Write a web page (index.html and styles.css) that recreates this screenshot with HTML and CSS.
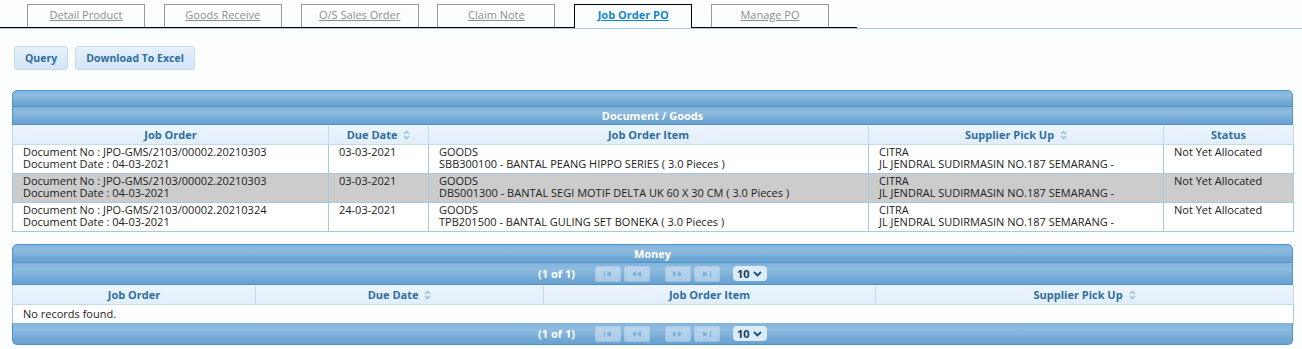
FILE: index.html
```html
<!DOCTYPE html>
<html>
<head>
<meta charset="utf-8">
<link rel="stylesheet" href="styles.css">
</head>
<body>
<div class="tabbar">
  <ul class="tabs">
    <li class="tab"><a href="#">Detail Product</a></li>
    <li class="tab"><a href="#">Goods Receive</a></li>
    <li class="tab"><a href="#">O/S Sales Order</a></li>
    <li class="tab"><a href="#">Claim Note</a></li>
    <li class="tab active"><a href="#">Job Order PO</a></li>
    <li class="tab"><a href="#">Manage PO</a></li>
  </ul>
</div>

<div class="toolbar">
  <button class="btn">Query</button>
  <button class="btn">Download To Excel</button>
</div>

<div class="datatable dt1">
  <div class="hbar top"></div>
  <div class="hbar title">Document / Goods</div>
  <table>
    <colgroup>
      <col style="width:316px"><col style="width:100px"><col style="width:440px"><col style="width:295px"><col style="width:130px">
    </colgroup>
    <thead>
      <tr>
        <th>Job Order</th>
        <th>Due Date <span class="sort"></span></th>
        <th>Job Order Item</th>
        <th>Supplier Pick Up <span class="sort"></span></th>
        <th>Status</th>
      </tr>
    </thead>
    <tbody>
      <tr>
        <td>Document No : JPO-GMS/2103/00002.20210303<br>Document Date : 04-03-2021</td>
        <td>03-03-2021</td>
        <td>GOODS<br>SBB300100 - BANTAL PEANG HIPPO SERIES ( 3.0 Pieces )</td>
        <td>CITRA<br>JL JENDRAL SUDIRMASIN NO.187 SEMARANG -</td>
        <td>Not Yet Allocated</td>
      </tr>
      <tr class="selected">
        <td>Document No : JPO-GMS/2103/00002.20210303<br>Document Date : 04-03-2021</td>
        <td>03-03-2021</td>
        <td>GOODS<br>DBS001300 - BANTAL SEGI MOTIF DELTA UK 60 X 30 CM ( 3.0 Pieces )</td>
        <td>CITRA<br>JL JENDRAL SUDIRMASIN NO.187 SEMARANG -</td>
        <td>Not Yet Allocated</td>
      </tr>
      <tr>
        <td>Document No : JPO-GMS/2103/00002.20210324<br>Document Date : 04-03-2021</td>
        <td>24-03-2021</td>
        <td>GOODS<br>TPB201500 - BANTAL GULING SET BONEKA ( 3.0 Pieces )</td>
        <td>CITRA<br>JL JENDRAL SUDIRMASIN NO.187 SEMARANG -</td>
        <td>Not Yet Allocated</td>
      </tr>
    </tbody>
  </table>
</div>

<div class="datatable dt2">
  <div class="hbar title top">Money</div>
  <div class="hbar pager">
    <span class="pcount">(1 of 1)</span>
    <span class="pbtn first"><svg width="8" height="6" viewBox="0 0 8 6"><rect x="0" y="0" width="1" height="6" fill="#3d7fbf"/><path d="M7 0 L2 3 L7 6Z" fill="#3d7fbf"/></svg></span>
    <span class="pbtn prev"><svg width="9" height="6" viewBox="0 0 9 6"><path d="M4 0 L0 3 L4 6Z M9 0 L5 3 L9 6Z" fill="#3d7fbf"/></svg></span>
    <span class="pbtn next gapl"><svg width="9" height="6" viewBox="0 0 9 6"><path d="M0 0 L4 3 L0 6Z M5 0 L9 3 L5 6Z" fill="#3d7fbf"/></svg></span>
    <span class="pbtn last"><svg width="8" height="6" viewBox="0 0 8 6"><path d="M0 0 L5 3 L0 6Z" fill="#3d7fbf"/><rect x="7" y="0" width="1" height="6" fill="#3d7fbf"/></svg></span>
    <span class="rpp">10 <svg width="9" height="6" viewBox="0 0 9 6"><path d="M1 1 L4.5 4.5 L8 1" fill="none" stroke="#1d4f7c" stroke-width="1.8"/></svg></span>
  </div>
  <table>
    <colgroup>
      <col style="width:243px"><col style="width:288px"><col style="width:332px"><col style="width:418px">
    </colgroup>
    <thead>
      <tr>
        <th>Job Order</th>
        <th>Due Date <span class="sort"></span></th>
        <th>Job Order Item</th>
        <th>Supplier Pick Up <span class="sort"></span></th>
      </tr>
    </thead>
    <tbody>
      <tr class="empty"><td colspan="4">No records found.</td></tr>
    </tbody>
  </table>
  <div class="hbar pager bottom">
    <span class="pcount">(1 of 1)</span>
    <span class="pbtn first"><svg width="8" height="6" viewBox="0 0 8 6"><rect x="0" y="0" width="1" height="6" fill="#3d7fbf"/><path d="M7 0 L2 3 L7 6Z" fill="#3d7fbf"/></svg></span>
    <span class="pbtn prev"><svg width="9" height="6" viewBox="0 0 9 6"><path d="M4 0 L0 3 L4 6Z M9 0 L5 3 L9 6Z" fill="#3d7fbf"/></svg></span>
    <span class="pbtn next gapl"><svg width="9" height="6" viewBox="0 0 9 6"><path d="M0 0 L4 3 L0 6Z M5 0 L9 3 L5 6Z" fill="#3d7fbf"/></svg></span>
    <span class="pbtn last"><svg width="8" height="6" viewBox="0 0 8 6"><path d="M0 0 L5 3 L0 6Z" fill="#3d7fbf"/><rect x="7" y="0" width="1" height="6" fill="#3d7fbf"/></svg></span>
    <span class="rpp">10 <svg width="9" height="6" viewBox="0 0 9 6"><path d="M1 1 L4.5 4.5 L8 1" fill="none" stroke="#1d4f7c" stroke-width="1.8"/></svg></span>
  </div>
</div>
</body>
</html>
```

FILE: styles.css
```css
html, body {
  margin: 0;
  padding: 0;
}
body {
  background: #fcfdfd;
  font-family: "Open Sans", "DejaVu Sans", sans-serif;
  font-size: 11px;
  color: #222;
}

/* tabs */
.tabbar {
  border-bottom: 1px solid #a8cbe6;
  padding-top: 4px;
}
.tabs {
  list-style: none;
  margin: 0;
  padding: 0 0 0 27px;
  width: 830px;
  display: flex;
  gap: 18.8px;
  border-bottom: 1px solid #000;
}
.tab {
  width: 116px;
  height: 22px;
  border: 1px solid #9a9a9a;
  border-bottom: none;
  display: flex;
  align-items: flex-start;
  justify-content: center;
  box-sizing: content-box;
}
.tab a {
  color: #8e8e8e;
  text-decoration: underline;
  line-height: 14px;
  padding-top: 3px;
}
.tab.active {
  border-color: #000;
  background: #fcfdfd;
  margin-bottom: -1px;
  height: 23px;
}
.tab.active a {
  color: #1188cc;
  font-weight: bold;
}

/* toolbar */
.toolbar {
  display: flex;
  gap: 7px;
  padding: 17px 0 0 14px;
  height: 24px;
}
.btn {
  margin: 0;
  height: 24px;
  padding: 0 10px;
  border: 1px solid #c5dbec;
  border-radius: 3px;
  background: linear-gradient(to bottom, #e6f1fb 0%, #dcebf9 50%, #d3e5f6 100%);
  color: #2e6e9e;
  font-family: "Open Sans", "DejaVu Sans", sans-serif;
  font-size: 10.5px;
  font-weight: bold;
  cursor: pointer;
}

/* data tables */
.datatable {
  margin-left: 12px;
  width: 1281px;
}
.dt1 { margin-top: 20px; }
.dt2 { margin-top: 12px; }

.hbar {
  box-sizing: border-box;
  border: 1px solid #4e93d0;
  border-top: none;
  background: linear-gradient(to bottom, #83b4dc 0%, #8ebbdf 30%, #80b2da 55%, #6fa6d3 80%, #69a2d1 100%);
  color: #fff;
  font-weight: bold;
  text-align: center;
}
.hbar.top {
  border-top: 1px solid #4e93d0;
  border-radius: 5px 5px 0 0;
}
.dt1 .hbar.top { height: 17px; }
.hbar.title {
  height: 18px;
  line-height: 17px;
}
.dt2 .hbar.title { height: 19px; line-height: 17px; }
.hbar.pager {
  height: 22px;
  display: flex;
  align-items: center;
  justify-content: center;
  padding-left: 0;
}
.hbar.bottom {
  border-radius: 0 0 5px 5px;
}
.pcount {
  margin-right: 20px;
  font-weight: bold;
  color: #fff;
}
.pbtn {
  width: 26px;
  height: 16px;
  box-sizing: border-box;
  border: 1px solid #c5dbec;
  border-radius: 2px;
  background: #dcebf9;
  margin-right: 3px;
  display: flex;
  align-items: center;
  justify-content: center;
  opacity: 0.55;
}
.pbtn svg { opacity: 0.6; }
.pbtn.gapl { margin-left: 12px; }
.rpp {
  margin-left: 10px;
  height: 15px;
  width: 34px;
  box-sizing: border-box;
  border-radius: 4px;
  background: #dcebf8;
  color: #1d3d5c;
  font-weight: bold;
  font-size: 11px;
  display: flex;
  align-items: center;
  gap: 3px;
  padding-left: 4px;
  line-height: 13px;
}

table {
  border-collapse: collapse;
  table-layout: fixed;
  width: 1281px;
}
th {
  height: 19px;
  padding: 0 10px;
  background: linear-gradient(to bottom, #ecf5fd 0%, #e6f1fc 50%, #e0eefb 100%);
  border: 1px solid #c5dbec;
  border-top: none;
  color: #2e6e9e;
  font-weight: bold;
  text-align: center;
  line-height: 18px;
}
.sort {
  display: inline-block;
  width: 7px;
  height: 10px;
  margin-left: 3px;
  vertical-align: -1px;
  background:
    url("data:image/svg+xml;utf8,<svg xmlns='http://www.w3.org/2000/svg' width='7' height='10' viewBox='0 0 7 10'><path d='M1 4 L3.5 1.5 L6 4 M1 6 L3.5 8.5 L6 6' fill='none' stroke='%2392bde0' stroke-width='1.3'/></svg>") no-repeat center;
}
td {
  padding: 1px 10px 3px;
  border: 1px solid #a6c9e2;
  background: #fff;
  vertical-align: top;
  line-height: 12px;
  white-space: nowrap;
  overflow: hidden;
  color: #222;
}
.dt1 td { height: 24px; }
tr.selected td {
  background: #cccccc;
}
tr.empty td {
  height: 14px;
  padding: 3px 10px 1px;
}
.dt2 table td { border-bottom: none; }
```
